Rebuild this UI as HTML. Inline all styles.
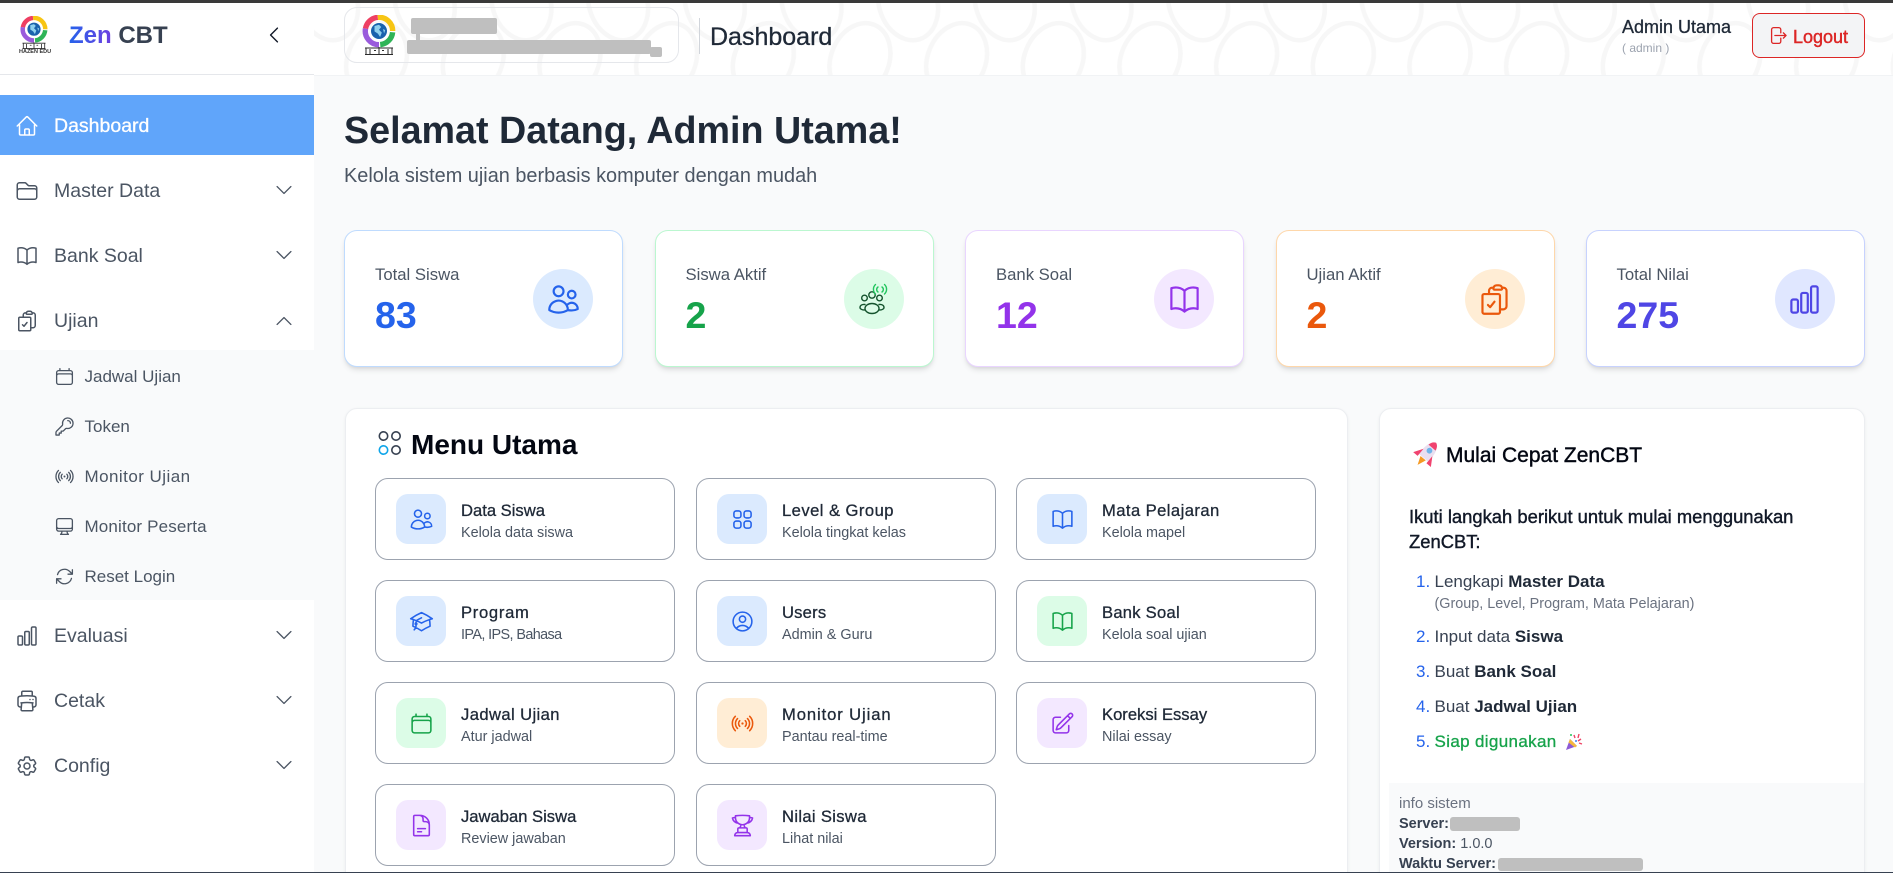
<!DOCTYPE html>
<html lang="id">
<head>
<meta charset="utf-8">
<title>Zen CBT Dashboard</title>
<style>
html,body{margin:0;padding:0;width:1893px;height:873px;overflow:hidden;background:#f9fafb;font-family:"Liberation Sans",Arial,sans-serif;color:#1f2937}
*{box-sizing:border-box}
#root{position:relative;width:1893px;height:873px;overflow:hidden}
.a,.t{position:absolute}
.t{white-space:nowrap;line-height:20px}
.m{-webkit-text-stroke:.3px currentColor}
svg.i{position:absolute;fill:none;stroke:currentColor;stroke-width:1.5;stroke-linecap:round;stroke-linejoin:round}
.nav{color:#4b5563;font-size:19.5px}
.sub{color:#4b5563;font-size:17px}
.stat{position:absolute;top:230px;width:279px;height:137px;background:#fff;border:1px solid;border-radius:13px;box-shadow:0 4px 6px -1px rgba(0,0,0,.1),0 2px 4px -2px rgba(0,0,0,.1)}
.stat .l{position:absolute;left:30px;top:34px;font-size:16.7px;line-height:20px;color:#4b5563;white-space:nowrap}
.stat .n{position:absolute;left:30px;top:64px;font-size:37.5px;line-height:40px;font-weight:700;white-space:nowrap}
.stat .c{position:absolute;right:29px;top:38px;width:60px;height:60px;border-radius:50%}
.stat .c svg{left:12.5px;top:12.5px}
.panel{position:absolute;top:408px;height:480px;background:#fff;border:1px solid #eceef1;border-radius:12px;box-shadow:0 1px 3px rgba(0,0,0,.06)}
.item{position:absolute;width:300px;height:82px;background:#fff;border:1px solid #9ca3af;border-radius:13px}
.item .b{position:absolute;left:20px;top:15px;width:50px;height:50px;border-radius:12px}
.item .b svg{left:12.5px;top:12.5px}
.item .h{position:absolute;left:85px;top:22px;font-size:16.6px;line-height:20px;color:#1f2937;white-space:nowrap;-webkit-text-stroke:.3px currentColor}
.item .s{position:absolute;left:85px;top:44px;font-size:14.4px;line-height:20px;color:#4b5563;white-space:nowrap}
.blue{background:#dbeafe;color:#2563eb}.green{background:#dcfce7;color:#16a34a}.purple{background:#f3e8ff;color:#9333ea}.orange{background:#ffedd5;color:#ea580c}.indigo{background:#e0e7ff;color:#4f46e5}
.red{position:absolute;background:#bfbfbf}
.li{font-size:17px;color:#374151}
.li b{color:#1f2937}
.num{color:#2563eb;font-size:17px}
</style>
</head>
<body>
<div id="root">
<svg width="0" height="0" style="position:absolute">
<defs>
<symbol id="home" viewBox="0 0 24 24"><path d="M2.25 12l8.954-8.955c.44-.439 1.152-.439 1.591 0L21.75 12M4.5 9.75v10.125c0 .621.504 1.125 1.125 1.125H9.75v-4.875c0-.621.504-1.125 1.125-1.125h2.25c.621 0 1.125.504 1.125 1.125V21h4.125c.621 0 1.125-.504 1.125-1.125V9.75M8.25 21h8.25"/></symbol>
<symbol id="folder" viewBox="0 0 24 24"><path d="M2.25 12.75V12A2.25 2.25 0 014.5 9.75h15A2.25 2.25 0 0121.75 12v.75m-8.69-6.44l-2.12-2.12a1.5 1.5 0 00-1.061-.44H4.5A2.25 2.25 0 002.25 6v12a2.25 2.25 0 002.25 2.25h15A2.25 2.25 0 0021.75 18V9a2.25 2.25 0 00-2.25-2.25h-5.379a1.5 1.5 0 01-1.06-.44z"/></symbol>
<symbol id="book" viewBox="0 0 24 24"><path d="M12 6.042A8.967 8.967 0 006 3.75c-1.052 0-2.062.18-3 .512v14.25A8.987 8.987 0 016 18c2.305 0 4.408.867 6 2.292m0-14.25a8.966 8.966 0 016-2.292c1.052 0 2.062.18 3 .512v14.25A8.987 8.987 0 0018 18a8.967 8.967 0 00-6 2.292m0-14.25v14.25"/></symbol>
<symbol id="clip" viewBox="0 0 24 24"><path d="M11.35 3.836c-.065.21-.1.433-.1.664 0 .414.336.75.75.75h4.5a.75.75 0 00.75-.75 2.25 2.25 0 00-.1-.664m-5.8 0A2.251 2.251 0 0113.5 2.25H15c1.012 0 1.867.668 2.15 1.586m-5.8 0c-.376.023-.75.05-1.124.08C9.095 4.01 8.25 4.973 8.25 6.108V8.25m8.9-4.414c.376.023.75.05 1.124.08 1.131.094 1.976 1.057 1.976 2.192V16.5A2.25 2.25 0 0118 18.75h-2.25m-7.5-10.5H4.875c-.621 0-1.125.504-1.125 1.125v11.25c0 .621.504 1.125 1.125 1.125h9.75c.621 0 1.125-.504 1.125-1.125V18.75m-7.5-10.5h6.375c.621 0 1.125.504 1.125 1.125v9.375m-8.25-3l1.5 1.5 3-3.75"/></symbol>
<symbol id="chart" viewBox="0 0 24 24"><path d="M3 13.125C3 12.504 3.504 12 4.125 12h2.25c.621 0 1.125.504 1.125 1.125v6.75C7.5 20.496 6.996 21 6.375 21h-2.25A1.125 1.125 0 013 19.875v-6.75zM9.75 8.625c0-.621.504-1.125 1.125-1.125h2.25c.621 0 1.125.504 1.125 1.125v11.25c0 .621-.504 1.125-1.125 1.125h-2.25a1.125 1.125 0 01-1.125-1.125V8.625zM16.5 4.125c0-.621.504-1.125 1.125-1.125h2.25C20.496 3 21 3.504 21 4.125v15.75c0 .621-.504 1.125-1.125 1.125h-2.25a1.125 1.125 0 01-1.125-1.125V4.125z"/></symbol>
<symbol id="printer" viewBox="0 0 24 24"><path d="M6.72 13.829c-.24.03-.48.062-.72.096m.72-.096a42.415 42.415 0 0110.56 0m-10.56 0L6.34 18m10.94-4.171c.24.03.48.062.72.096m-.72-.096L17.66 18m0 0l.229 2.523a1.125 1.125 0 01-1.12 1.227H7.231c-.662 0-1.18-.568-1.12-1.227L6.34 18m11.318 0h1.091A2.25 2.25 0 0021 15.75V9.456c0-1.081-.768-2.015-1.837-2.175a48.055 48.055 0 00-1.913-.247M6.34 18H5.25A2.25 2.25 0 013 15.75V9.456c0-1.081.768-2.015 1.837-2.175a48.041 48.041 0 011.913-.247m10.5 0a48.536 48.536 0 00-10.5 0m10.5 0V3.375c0-.621-.504-1.125-1.125-1.125h-8.25c-.621 0-1.125.504-1.125 1.125v3.659M18 10.5h.008v.008H18V10.5zm-3 0h.008v.008H15V10.5z"/></symbol>
<symbol id="cog" viewBox="0 0 24 24"><path d="M9.594 3.94c.09-.542.56-.94 1.11-.94h2.593c.55 0 1.02.398 1.11.94l.213 1.281c.063.374.313.686.645.87.074.04.147.083.22.127.324.196.72.257 1.075.124l1.217-.456a1.125 1.125 0 011.37.49l1.296 2.247a1.125 1.125 0 01-.26 1.431l-1.003.827c-.293.24-.438.613-.431.992a6.759 6.759 0 010 .255c-.007.378.138.75.43.99l1.005.828c.424.35.534.954.26 1.43l-1.298 2.247a1.125 1.125 0 01-1.369.491l-1.217-.456c-.355-.133-.75-.072-1.076.124a6.57 6.57 0 01-.22.128c-.331.183-.581.495-.644.869l-.213 1.28c-.09.543-.56.941-1.11.941h-2.594c-.55 0-1.02-.398-1.11-.94l-.213-1.281c-.062-.374-.312-.686-.644-.87a6.52 6.52 0 01-.22-.127c-.325-.196-.72-.257-1.076-.124l-1.217.456a1.125 1.125 0 01-1.369-.49l-1.297-2.247a1.125 1.125 0 01.26-1.431l1.004-.827c.292-.24.437-.613.43-.992a6.932 6.932 0 010-.255c.007-.378-.138-.75-.43-.99l-1.004-.828a1.125 1.125 0 01-.26-1.43l1.297-2.247a1.125 1.125 0 011.37-.491l1.216.456c.356.133.751.072 1.076-.124.072-.044.146-.087.22-.128.332-.183.582-.495.644-.869l.214-1.281z"/><path d="M15 12a3 3 0 11-6 0 3 3 0 016 0z"/></symbol>
<symbol id="cal" viewBox="0 0 24 24"><path d="M6.75 3v2.25M17.25 3v2.25M3 18.75V7.5a2.25 2.25 0 012.25-2.25h13.5A2.25 2.25 0 0121 7.5v11.25m-18 0A2.25 2.25 0 005.25 21h13.5A2.25 2.25 0 0021 18.75m-18 0v-7.5A2.25 2.25 0 015.25 9h13.5A2.25 2.25 0 0121 11.25v7.5"/></symbol>
<symbol id="key" viewBox="0 0 24 24"><path d="M15.75 5.25a3 3 0 013 3m3 0a6 6 0 01-7.029 5.912c-.563-.097-1.159.026-1.563.43L10.5 17.25H8.25v2.25H6v2.25H2.25v-2.818c0-.597.237-1.17.659-1.591l6.499-6.499c.404-.404.527-1 .43-1.563A6 6 0 1121.75 8.25z"/></symbol>
<symbol id="signal" viewBox="0 0 24 24"><path d="M9.348 14.651a3.75 3.75 0 010-5.303m5.304 0a3.75 3.75 0 010 5.303m-7.425 2.122a6.75 6.75 0 010-9.546m9.546 0a6.75 6.75 0 010 9.546M5.106 18.894c-3.808-3.808-3.808-9.98 0-13.789m13.788 0c3.808 3.808 3.808 9.981 0 13.79M12 12h.008v.007H12V12zm.375 0a.375.375 0 11-.75 0 .375.375 0 01.75 0z"/></symbol>
<symbol id="desk" viewBox="0 0 24 24"><path d="M9 17.25v1.007a3 3 0 01-.879 2.122L7.5 21h9l-.621-.621A3 3 0 0115 18.257V17.25m6-12V15a2.25 2.25 0 01-2.25 2.25H5.25A2.25 2.25 0 013 15V5.25m18 0A2.25 2.25 0 0018.75 3H5.25A2.25 2.25 0 003 5.25m18 0V12a2.25 2.25 0 01-2.25 2.25H5.25A2.25 2.25 0 013 12V5.25"/></symbol>
<symbol id="reset" viewBox="0 0 24 24"><path d="M16.023 9.348h4.992v-.001M2.985 19.644v-4.992m0 0h4.992m-4.993 0l3.181 3.183a8.25 8.25 0 0013.803-3.7M4.031 9.865a8.25 8.25 0 0113.803-3.7l3.181 3.182m0-4.991v4.99"/></symbol>
<symbol id="users" viewBox="0 0 24 24"><path d="M15 19.128a9.38 9.38 0 002.625.372 9.337 9.337 0 004.121-.952 4.125 4.125 0 00-7.533-2.493M15 19.128v-.003c0-1.113-.285-2.16-.786-3.07M15 19.128v.106A12.318 12.318 0 018.624 21c-2.331 0-4.512-.645-6.374-1.766l-.001-.109a6.375 6.375 0 0111.964-3.07M12 6.375a3.375 3.375 0 11-6.75 0 3.375 3.375 0 016.75 0zm8.25 2.25a2.625 2.625 0 11-5.25 0 2.625 2.625 0 015.25 0z"/></symbol>
<symbol id="squares" viewBox="0 0 24 24"><path d="M3.75 6A2.25 2.25 0 016 3.75h2.25A2.25 2.25 0 0110.5 6v2.25a2.25 2.25 0 01-2.25 2.25H6a2.25 2.25 0 01-2.25-2.25V6zM3.75 15.75A2.25 2.25 0 016 13.5h2.25a2.25 2.25 0 012.25 2.25V18a2.25 2.25 0 01-2.25 2.25H6A2.25 2.25 0 013.75 18v-2.25zM13.5 6a2.25 2.25 0 012.25-2.25H18A2.25 2.25 0 0120.25 6v2.25A2.25 2.25 0 0118 10.5h-2.25a2.25 2.25 0 01-2.25-2.25V6zM13.5 15.75a2.25 2.25 0 012.25-2.25H18a2.25 2.25 0 012.25 2.25V18A2.25 2.25 0 0118 20.25h-2.25A2.25 2.25 0 0113.5 18v-2.25z"/></symbol>
<symbol id="cap" viewBox="0 0 24 24"><path d="M4.26 10.147a60.436 60.436 0 00-.491 6.347A48.627 48.627 0 0112 20.904a48.627 48.627 0 018.232-4.41 60.46 60.46 0 00-.491-6.347m-15.482 0a50.57 50.57 0 00-2.658-.813A59.905 59.905 0 0112 3.493a59.902 59.902 0 0110.399 5.84c-.896.248-1.783.52-2.658.814m-15.482 0A50.697 50.697 0 0112 13.489a50.702 50.702 0 017.74-3.342M6.75 15a.75.75 0 100-1.5.75.75 0 000 1.5zm0 0v-3.675A55.378 55.378 0 0112 8.443m-7.007 11.55A5.981 5.981 0 006.75 15.75v-1.5"/></symbol>
<symbol id="user" viewBox="0 0 24 24"><path d="M17.982 18.725A7.488 7.488 0 0012 15.75a7.488 7.488 0 00-5.982 2.975m11.963 0a9 9 0 10-11.963 0m11.963 0A8.966 8.966 0 0112 21a8.966 8.966 0 01-5.982-2.275M15 9.75a3 3 0 11-6 0 3 3 0 016 0z"/></symbol>
<symbol id="pencil" viewBox="0 0 24 24"><path d="M16.862 4.487l1.687-1.688a1.875 1.875 0 112.652 2.652L10.582 16.07a4.5 4.5 0 01-1.897 1.13L6 18l.8-2.685a4.5 4.5 0 011.13-1.897l8.932-8.931zm0 0L19.5 7.125M18 14v4.75A2.25 2.25 0 0115.75 21H5.25A2.25 2.25 0 013 18.75V8.25A2.25 2.25 0 015.25 6H10"/></symbol>
<symbol id="doc" viewBox="0 0 24 24"><path d="M19.5 14.25v-2.625a3.375 3.375 0 00-3.375-3.375h-1.5A1.125 1.125 0 0113.5 7.125v-1.5a3.375 3.375 0 00-3.375-3.375H8.25m0 12.75h7.5m-7.5 3H12M10.5 2.25H5.625c-.621 0-1.125.504-1.125 1.125v17.25c0 .621.504 1.125 1.125 1.125h12.75c.621 0 1.125-.504 1.125-1.125V11.25a9 9 0 00-9-9z"/></symbol>
<symbol id="trophy" viewBox="0 0 24 24"><path d="M16.5 18.75h-9m9 0a3 3 0 013 3h-15a3 3 0 013-3m9 0v-3.375c0-.621-.503-1.125-1.125-1.125h-.871M7.5 18.75v-3.375c0-.621.504-1.125 1.125-1.125h.872m5.007 0H9.497m5.007 0a7.454 7.454 0 01-.982-3.172M9.497 14.25a7.454 7.454 0 00.981-3.172M5.25 4.236c-.982.143-1.954.317-2.916.52A6.003 6.003 0 007.73 9.728M5.25 4.236V4.5c0 2.108.966 3.99 2.48 5.228M5.25 4.236V2.721C7.456 2.41 9.71 2.25 12 2.25c2.291 0 4.545.16 6.75.47v1.516M7.73 9.728a6.726 6.726 0 002.748 1.35m8.272-6.842V4.5c0 2.108-.966 3.99-2.48 5.228m2.48-5.492a46.32 46.32 0 012.916.52 6.003 6.003 0 01-5.395 4.972m0 0a6.726 6.726 0 01-2.749 1.35m0 0a6.772 6.772 0 01-3.044 0"/></symbol>
<symbol id="logout" viewBox="0 0 24 24"><path d="M15.75 9V5.25A2.25 2.25 0 0013.5 3h-6a2.25 2.25 0 00-2.25 2.25v13.5A2.25 2.25 0 007.5 21h6a2.25 2.25 0 002.25-2.25V15m3 0l3-3m0 0l-3-3m3 3H9"/></symbol>
<symbol id="down" viewBox="0 0 24 24"><path d="M19.5 8.25l-7.5 7.5-7.5-7.5"/></symbol>
<symbol id="up" viewBox="0 0 24 24"><path d="M4.5 15.75l7.5-7.5 7.5 7.5"/></symbol>
<symbol id="left" viewBox="0 0 24 24"><path d="M15.75 19.5L8.25 12l7.5-7.5"/></symbol>
<symbol id="logo" viewBox="0 0 34 40">
<g fill="none" stroke-width="5.4">
<path d="M3.5 13.6A13.7 13.7 0 0 1 15.8 2.35" stroke="#ee3f63"/>
<path d="M15.8 2.35A13.7 13.7 0 0 1 30.7 16" stroke="#f7c514"/>
<path d="M30.6 17.2A13.7 13.7 0 0 1 18.2 29.6" stroke="#2fb457"/>
<path d="M17 29.7A13.7 13.7 0 0 1 3.5 13.6" stroke="#9a5bdc"/>
</g>
<circle cx="17" cy="16" r="8.8" fill="#fff"/>
<circle cx="17" cy="16" r="8" fill="#1a62ad"/>
<path d="M12.500 11l4.500-1.200 2.200 2.200-2.200 2.800 2.800 2.800-1.700 4.400-2.200-3.400-3.400-2.200zM21 14l2.200 1.100-1.100 3.300z" fill="#8fd0ee"/>
<g fill="none" stroke="#2b2b2b" stroke-width="1">
<path d="M3 33h28M3 39.500h28M4 33v6.500M30 33v6.500M8 34v5M26 34v5M17 32v7.500M12 35.500h2M20 35.500h2"/>
</g>
</symbol>
<pattern id="pt" width="96.67" height="200" patternUnits="userSpaceOnUse">
<g fill="none" stroke="#f7f7f7" stroke-width="4.6">
<ellipse cx="86.6" cy="60" rx="29" ry="38" transform="rotate(22 86.6 60)"/>
<ellipse cx="-10.07" cy="60" rx="29" ry="38" transform="rotate(22 -10.07 60)"/>
<ellipse cx="38" cy="3" rx="29" ry="38" transform="rotate(-18 38 3)"/>
</g>
</pattern>
</defs>
</svg>

<!-- Sidebar -->
<div class="a" style="left:0;top:0;width:314px;height:873px;background:#fff"></div>
<div class="a" style="left:0;top:74px;width:314px;height:1px;background:#e5e7eb"></div>
<svg class="a" style="left:20px;top:16px" width="28" height="33"><use href="#logo"/></svg>
<div class="t" style="left:19px;top:49px;width:30px;text-align:center;font-size:5.5px;line-height:6px;font-weight:700;color:#333">HAZEN EDU</div>
<div class="t" style="left:69px;top:24px;font-size:24px;line-height:24px;font-weight:700"><span style="background:linear-gradient(90deg,#2563eb,#6d3fe0);-webkit-background-clip:text;background-clip:text;color:transparent">Zen</span> <span style="color:#374151">CBT</span></div>
<svg class="i" style="left:263px;top:24px;color:#111827" width="22" height="22"><use href="#left"/></svg>

<div class="a" style="left:0;top:95px;width:314px;height:60px;background:#60a5fa"></div>
<svg class="i" style="left:14.500px;top:114px;color:#fff" width="24" height="24"><use href="#home"/></svg>
<div class="t m" style="left:54px;top:116px;font-size:19.5px;color:#fff">Dashboard</div>

<svg class="i" style="left:14.500px;top:179px;color:#4b5563" width="24" height="24"><use href="#folder"/></svg>
<div class="t nav" style="left:54px;top:181px">Master Data</div>
<svg class="i" style="left:273px;top:179px;color:#4b5563" width="22" height="22"><use href="#down"/></svg>

<svg class="i" style="left:14.500px;top:244px;color:#4b5563" width="24" height="24"><use href="#book"/></svg>
<div class="t nav" style="left:54px;top:246px">Bank Soal</div>
<svg class="i" style="left:273px;top:244px;color:#4b5563" width="22" height="22"><use href="#down"/></svg>

<svg class="i" style="left:14.500px;top:309px;color:#4b5563" width="24" height="24"><use href="#clip"/></svg>
<div class="t nav" style="left:54px;top:311px">Ujian</div>
<svg class="i" style="left:273px;top:310px;color:#4b5563" width="22" height="22"><use href="#up"/></svg>

<div class="a" style="left:0;top:350px;width:314px;height:250px;background:#f9fafb"></div>
<svg class="i" style="left:53.500px;top:365.500px;color:#4b5563" width="21" height="21"><use href="#cal"/></svg>
<div class="t sub" style="left:84.500px;top:367px">Jadwal Ujian</div>
<svg class="i" style="left:53.500px;top:415.500px;color:#4b5563" width="21" height="21"><use href="#key"/></svg>
<div class="t sub" style="left:84.500px;top:417px">Token</div>
<svg class="i" style="left:53.500px;top:465.500px;color:#4b5563" width="21" height="21"><use href="#signal"/></svg>
<div class="t sub" style="left:84.500px;top:467px;letter-spacing:.45px">Monitor Ujian</div>
<svg class="i" style="left:53.500px;top:515.500px;color:#4b5563" width="21" height="21"><use href="#desk"/></svg>
<div class="t sub" style="left:84.500px;top:517px;letter-spacing:.15px">Monitor Peserta</div>
<svg class="i" style="left:53.500px;top:565.500px;color:#4b5563" width="21" height="21"><use href="#reset"/></svg>
<div class="t sub" style="left:84.500px;top:567px">Reset Login</div>

<svg class="i" style="left:14.500px;top:624px;color:#4b5563" width="24" height="24"><use href="#chart"/></svg>
<div class="t nav" style="left:54px;top:626px">Evaluasi</div>
<svg class="i" style="left:273px;top:624px;color:#4b5563" width="22" height="22"><use href="#down"/></svg>

<svg class="i" style="left:14.500px;top:689px;color:#4b5563" width="24" height="24"><use href="#printer"/></svg>
<div class="t nav" style="left:54px;top:691px">Cetak</div>
<svg class="i" style="left:273px;top:689px;color:#4b5563" width="22" height="22"><use href="#down"/></svg>

<svg class="i" style="left:14.500px;top:754px;color:#4b5563" width="24" height="24"><use href="#cog"/></svg>
<div class="t nav" style="left:54px;top:756px">Config</div>
<svg class="i" style="left:273px;top:754px;color:#4b5563" width="22" height="22"><use href="#down"/></svg>

<!-- Header -->
<div class="a" style="left:314px;top:0;width:1579px;height:76px;background:#fff;border-bottom:1px solid #f1f3f5"></div>
<svg class="a" style="left:314px;top:0" width="1579" height="75" viewBox="314 0 1579 75"><rect x="314" y="0" width="1579" height="75" fill="url(#pt)"/></svg>
<div class="a" style="left:344px;top:7px;width:335px;height:56px;border:1px solid #e5e7eb;border-radius:13px"></div>
<svg class="a" style="left:362px;top:15px" width="34" height="40"><use href="#logo"/></svg>
<div class="red" style="left:411px;top:18px;width:86px;height:16px;border-radius:2px"></div>
<div class="red" style="left:416px;top:34px;width:4px;height:6px"></div>
<div class="red" style="left:407px;top:40px;width:244px;height:14px;border-radius:2px"></div>
<div class="red" style="left:650px;top:47px;width:12px;height:10px;border-radius:2px"></div>
<div class="a" style="left:699px;top:18px;width:1px;height:36px;background:#d1d5db"></div>
<div class="t m" style="left:710px;top:27px;font-size:25px;color:#1f2937">Dashboard</div>
<div class="t m" style="left:1622px;top:17px;font-size:18px;color:#1f2937">Admin Utama</div>
<div class="t" style="left:1622px;top:38px;font-size:12px;color:#9ca3af">( admin )</div>
<div class="a" style="left:1751.5px;top:13px;width:113.5px;height:45px;border:1px solid #dc2626;border-radius:8px;background:#f3f4f6"></div>
<svg class="i" style="left:1767px;top:25px;color:#dc2626" width="21" height="21"><use href="#logout"/></svg>
<div class="t" style="left:1793px;top:27px;font-size:18px;color:#dc2626;-webkit-text-stroke:.45px currentColor">Logout</div>

<!-- Welcome -->
<div class="t" style="left:344px;top:106px;font-size:37.7px;line-height:48px;font-weight:700;color:#1f2937">Selamat Datang, Admin Utama!</div>
<div class="t" style="left:344px;top:166px;font-size:19.9px;line-height:20px;color:#4b5563">Kelola sistem ujian berbasis komputer dengan mudah</div>

<!-- Stats -->
<div class="stat" style="left:344px;border-color:#bfdbfe">
<div class="l">Total Siswa</div><div class="n" style="color:#2563eb">83</div>
<div class="c blue"><svg class="i" width="35" height="35"><use href="#users"/></svg></div>
</div>
<div class="stat" style="left:654.500px;border-color:#bbf7d0">
<div class="l">Siswa Aktif</div><div class="n" style="color:#16a34a">2</div>
<div class="c" style="background:#dcfce7">
<svg class="i" style="left:14px;top:14px;stroke-width:1.4" width="34" height="34" viewBox="0 0 34 34">
<g stroke="#14532d"><circle cx="6.500" cy="15" r="2.800"/><circle cx="14" cy="12" r="3.200"/><circle cx="21.500" cy="15" r="2.800"/><ellipse cx="14" cy="25.500" rx="7" ry="5"/><path d="M7 21.500c-3-.5-5 1-5 3 0 1.500 2 2.500 4.500 2.500M21 21.500c3-.5 5 1 5 3 0 1.500-2 2.500-4.500 2.500"/></g>
<g stroke="#22c55e"><path d="M20 9a3 3 0 0 1 0-5M24 4a3 3 0 0 1 0 5M17.500 11a6.500 6.500 0 0 1 0-9.500M26.500 1.500a6.500 6.500 0 0 1 0 9.500"/></g>
</svg></div>
</div>
<div class="stat" style="left:965px;border-color:#e9d5ff">
<div class="l">Bank Soal</div><div class="n" style="color:#9333ea">12</div>
<div class="c purple"><svg class="i" width="35" height="35"><use href="#book"/></svg></div>
</div>
<div class="stat" style="left:1275.500px;border-color:#fed7aa">
<div class="l">Ujian Aktif</div><div class="n" style="color:#ea580c">2</div>
<div class="c orange"><svg class="i" width="35" height="35"><use href="#clip"/></svg></div>
</div>
<div class="stat" style="left:1585.500px;border-color:#c7d2fe">
<div class="l">Total Nilai</div><div class="n" style="color:#4f46e5">275</div>
<div class="c indigo"><svg class="i" width="35" height="35"><use href="#chart"/></svg></div>
</div>

<!-- Menu panel -->
<div class="panel" style="left:344.5px;width:1003px"></div>
<svg class="a" style="left:377px;top:431px" width="26" height="25" viewBox="0 0 26 25" fill="none" stroke-width="1.6">
<circle cx="6.500" cy="5" r="4.200" stroke="#374151"/><circle cx="19" cy="5" r="4.200" stroke="#374151"/>
<circle cx="6.500" cy="19" r="4.200" stroke="#0ea5e9"/><circle cx="19" cy="19" r="4.200" stroke="#374151"/>
</svg>
<div class="t" style="left:411px;top:430px;font-size:28px;line-height:30px;font-weight:700;color:#030712">Menu Utama</div>

<div class="item" style="left:375px;top:478px"><div class="b blue"><svg class="i" width="25" height="25"><use href="#users"/></svg></div><div class="h">Data Siswa</div><div class="s">Kelola data siswa</div></div>
<div class="item" style="left:696px;top:478px"><div class="b blue"><svg class="i" width="25" height="25"><use href="#squares"/></svg></div><div class="h" style="letter-spacing:.45px">Level &amp; Group</div><div class="s">Kelola tingkat kelas</div></div>
<div class="item" style="left:1016px;top:478px"><div class="b blue"><svg class="i" width="25" height="25"><use href="#book"/></svg></div><div class="h" style="letter-spacing:.43px">Mata Pelajaran</div><div class="s">Kelola mapel</div></div>

<div class="item" style="left:375px;top:580px"><div class="b blue"><svg class="i" width="25" height="25"><use href="#cap"/></svg></div><div class="h" style="letter-spacing:.7px">Program</div><div class="s" style="letter-spacing:-.6px">IPA, IPS, Bahasa</div></div>
<div class="item" style="left:696px;top:580px"><div class="b blue"><svg class="i" width="25" height="25"><use href="#user"/></svg></div><div class="h" style="letter-spacing:.2px">Users</div><div class="s">Admin &amp; Guru</div></div>
<div class="item" style="left:1016px;top:580px"><div class="b green"><svg class="i" width="25" height="25"><use href="#book"/></svg></div><div class="h" style="letter-spacing:.25px">Bank Soal</div><div class="s">Kelola soal ujian</div></div>

<div class="item" style="left:375px;top:682px"><div class="b green"><svg class="i" width="25" height="25"><use href="#cal"/></svg></div><div class="h" style="letter-spacing:.4px">Jadwal Ujian</div><div class="s">Atur jadwal</div></div>
<div class="item" style="left:696px;top:682px"><div class="b orange"><svg class="i" width="25" height="25"><use href="#signal"/></svg></div><div class="h" style="letter-spacing:.9px">Monitor Ujian</div><div class="s">Pantau real-time</div></div>
<div class="item" style="left:1016px;top:682px"><div class="b purple"><svg class="i" width="25" height="25"><use href="#pencil"/></svg></div><div class="h">Koreksi Essay</div><div class="s">Nilai essay</div></div>

<div class="item" style="left:375px;top:784px"><div class="b purple"><svg class="i" width="25" height="25"><use href="#doc"/></svg></div><div class="h">Jawaban Siswa</div><div class="s">Review jawaban</div></div>
<div class="item" style="left:696px;top:784px"><div class="b purple"><svg class="i" width="25" height="25"><use href="#trophy"/></svg></div><div class="h" style="letter-spacing:.33px">Nilai Siswa</div><div class="s">Lihat nilai</div></div>

<!-- Right panel -->
<div class="panel" style="left:1378.5px;width:486px"></div>
<svg class="a" style="left:1410px;top:442px" width="30" height="28" viewBox="0 0 26 24">
<g transform="rotate(40 13 12)">
<path d="M13 -3c5 3 6 9 5 17H8C7 6 8 0 13-3z" fill="#e9dff0"/>
<path d="M8 8l-5 8 5 0zM18 8l5 8-5 0z" fill="#f0436f"/>
<path d="M13 -3c2.500 1 3.500 3 4 5.500H9C9.500 0 10.500-2 13-3z" fill="#f0436f"/>
<circle cx="13" cy="6" r="2.500" fill="#6fb5ea"/>
<path d="M10 14.500h6l-3 7.500z" fill="#f59a23"/>
</g>
</svg>
<div class="t" style="left:1446px;top:446px;font-size:21px;color:#030712;-webkit-text-stroke:.4px currentColor">Mulai Cepat ZenCBT</div>
<div class="t" style="left:1409px;top:507px;font-size:18.4px;color:#111827;-webkit-text-stroke:.4px currentColor">Ikuti langkah berikut untuk mulai menggunakan</div>
<div class="t" style="left:1409px;top:532px;font-size:18.4px;color:#111827;-webkit-text-stroke:.4px currentColor">ZenCBT:</div>

<div class="t num" style="left:1416px;top:572px">1.</div>
<div class="t li" style="left:1434.5px;top:572px">Lengkapi <b>Master Data</b></div>
<div class="t" style="left:1434.5px;top:594px;font-size:14.4px;color:#6b7280">(Group, Level, Program, Mata Pelajaran)</div>
<div class="t num" style="left:1416px;top:627px">2.</div>
<div class="t li" style="left:1434.5px;top:627px">Input data <b>Siswa</b></div>
<div class="t num" style="left:1416px;top:662px">3.</div>
<div class="t li" style="left:1434.5px;top:662px">Buat <b>Bank Soal</b></div>
<div class="t num" style="left:1416px;top:697px">4.</div>
<div class="t li" style="left:1434.5px;top:697px">Buat <b>Jadwal Ujian</b></div>
<div class="t num" style="left:1416px;top:732px">5.</div>
<div class="t li" style="left:1434.5px;top:732px;color:#16a34a;letter-spacing:.35px;-webkit-text-stroke:.3px #16a34a">Siap digunakan</div>
<svg class="a" style="left:1565px;top:733px" width="18" height="18" viewBox="0 0 18 18">
<path d="M1 17l4-11 7 7z" fill="#8e5bd6"/><path d="M5 6l7 7-2 1.500-6.500-5z" fill="#f5b83d"/>
<path d="M9 2l1 3M14 1l-1 4M16 6l-3 2M17 11l-3-1" stroke="#ef4466" stroke-width="1.400" fill="none"/>
<circle cx="11" cy="8" r="1" fill="#3b82f6"/><circle cx="6" cy="2" r="1" fill="#22c55e"/>
</svg>

<div class="a" style="left:1389px;top:783px;width:475px;height:90px;background:#f9fafb"></div>
<div class="t" style="left:1399px;top:794px;font-size:15px;color:#6b7280">info sistem</div>
<div class="t" style="left:1399px;top:814px;font-size:14.5px;color:#374151"><b>Server:</b></div>
<div class="red" style="left:1450px;top:817px;width:70px;height:14px;border-radius:3px"></div>
<div class="t" style="left:1399px;top:834px;font-size:14.5px;color:#4b5563"><b style="color:#374151">Version:</b> 1.0.0</div>
<div class="t" style="left:1399px;top:854px;font-size:14.5px;color:#374151"><b>Waktu Server:</b></div>
<div class="red" style="left:1498px;top:858px;width:145px;height:13px;border-radius:3px"></div>

<!-- Window edges -->
<div class="a" style="left:0;top:0;width:1893px;height:3px;background:#3a3a3a"></div>
<div class="a" style="left:0;top:872px;width:1893px;height:1px;background:#374151"></div>
</div>
</body>
</html>
